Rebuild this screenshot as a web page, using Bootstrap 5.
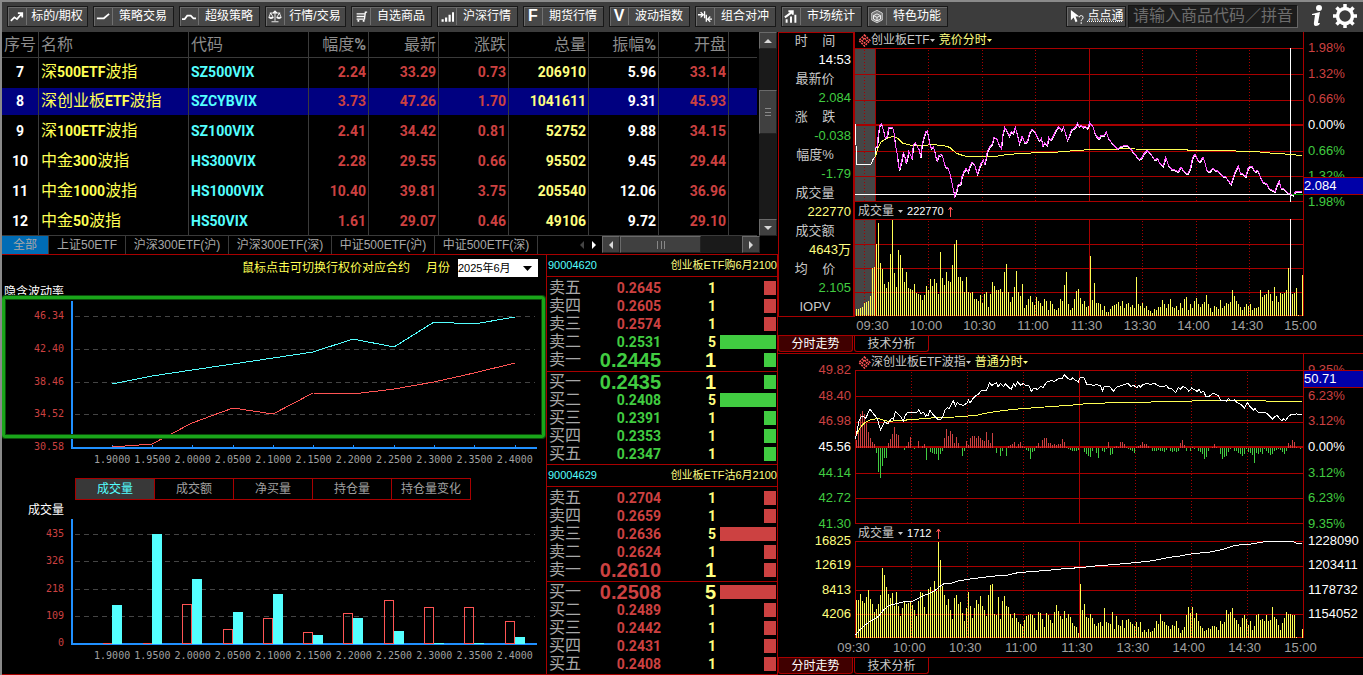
<!DOCTYPE html>
<html lang="zh-CN">
<head>
<meta charset="utf-8">
<meta name="viewport" content="width=device-width, initial-scale=1">
<title>期权行情</title>
<link href="https://cdn.jsdelivr.net/npm/bootstrap@5.3.0/dist/css/bootstrap.min.css" rel="stylesheet">
<style>
:root{--line:#a80000;--up:#cc4141;--down:#41cc41;--lemon:#ffff80;--aqua:#54ffff;--dim:#a0a0a0}
body{background:#000;color:#c8c8c8;font:12px/16px "Liberation Sans","Noto Sans CJK SC",sans-serif;border-left:2px solid #8a8a8a;min-height:100vh}
button,input,select{font-family:inherit}
svg{display:block}
.up{color:var(--up)!important}.down{color:var(--down)!important}.lemon{color:var(--lemon)!important}.aqua{color:var(--aqua)!important}
/* toolbar */
.topbar{height:32px;background:#3c3c3c;border-top:2px solid #8a8a8a;padding:0 5px 2px;gap:5px}
.tool{width:81px;height:21px;flex:none;border:1px solid #181818;background:#484848;box-shadow:inset 1px 1px #6a6a6a;color:#fff;font-size:12px;line-height:18px;padding:0}
.tool svg{width:19px;height:17px;padding:0 2px;border-right:1px solid #707070;flex:none}
.tool b{width:19px;font-size:16px;border-right:1px solid #707070;flex:none}
.tool span{flex:1}
.ask{width:60px;text-decoration:underline dotted}
.ask svg{border:0}
.search{width:170px;height:23px;margin-left:-3px;background:#1c1c1c;border:1px solid #141414;border-right-color:#666;border-bottom-color:#666;color:#fff;font-size:16px;padding:0 4px}
.search::placeholder{color:#6c6c6c}
.plain{background:none;border:0;padding:0}
/* layout */
.board{flex:776 1 0;min-width:0}
.quotes{flex:585 1 0;min-width:0}
/* quote list */
.list{width:100%;table-layout:fixed;border-collapse:separate;border-spacing:0;font:bold 14px/20px Roboto,"Noto Sans CJK SC",sans-serif}
.list th,.list td{height:30px;padding:0 2px;border-right:1px solid #3a3a3a;text-align:right;white-space:nowrap;overflow:hidden}
.list th{height:26px;border-bottom:1px solid #3a3a3a;color:#8c8c8c;font-weight:400;font-size:16px}
.list tbody tr:first-child td{height:28px}
.list tbody tr:last-child td{border-bottom:1px solid #3a3a3a}
.list th:last-child,.list td:last-child{border-right:0}
.list i{font-style:normal;font-weight:400;font-size:16px}
.list :is(th,td):is(:nth-child(2),:nth-child(3)){text-align:left}
.list td{color:var(--up)}
.list td:nth-child(1){color:#fff;text-align:center}
.list td:nth-child(2){color:#ffff54}
.list td:nth-child(3){color:var(--aqua)}
.list td:nth-child(7){color:var(--lemon)}
.list td:nth-child(8){color:#fff}
.list .picked td{background:#000080;box-shadow:inset 0 2px #000,inset 0 -1px #000}
.vbar{width:18px;flex:none;background:#1a1a1a;margin-left:2px;margin-right:1px}
.knob{background:#404040;border:1px solid #6a6a6a;border-right-color:#222;border-bottom-color:#222;color:#d8d8d8;padding:0;display:flex;align-items:center;justify-content:center}
.knob svg{width:8px;height:8px}
.vbar .knob{width:18px;height:17px}
.vbar .thumb{height:44px;margin-top:41px}
.hbar{width:158px;height:17px;background:#1a1a1a;margin-right:18px;flex:none}
.hbar .knob{width:18px}
.hbar .thumb{width:81px}
.packs{height:18px;background:#000}
.packs>button{background:#000;border:0;border-right:1px solid #3a3a3a;color:#a8a8a8;font-size:12px;line-height:16px;padding:0;width:103px;height:18px}
.packs>.on{background:#006cb5}
/* option charts */
.lower{border-top:1px solid var(--line);border-bottom:1px solid var(--line)}
.options{flex:544 1 0;min-width:0}
.pick{height:26px;font-size:12px;color:#ffff54;padding:0 8px}
.pick select{width:80px;height:18px;border:0;border-radius:0;color:#000;font-size:11px;padding:0;background:#fff;-webkit-appearance:none;appearance:none}
.pick .caret{right:6px;top:7px;pointer-events:none}
.curve{display:grid;grid-template-columns:64px 1fr;height:154px}
.curve.short{height:132px}
.curve svg{width:100%;height:100%}
.ticks,.strikes{font:10px/10px "DejaVu Sans Mono",monospace}
.ticks{color:var(--up);padding:7px 2px 0 0;line-height:16px;text-align:right}
.strikes{padding:0 11px 0 90px;color:var(--dim);height:10px}
.strikes span{flex:1 1 0;text-align:center}
.frame{left:0;right:1px;top:41px;height:142px;border:3px solid #1aa51a;border-radius:3px;box-shadow:0 0 0 1px #0b4d0b,inset 0 0 0 1px #0b4d0b;pointer-events:none}
.kinds{margin:13px 75px 0 73px;height:22px;border:1px solid var(--line)}
.kinds button{flex:1 1 0;background:#000;border:0;color:var(--dim);font-size:12px;line-height:18px;padding:0}
.kinds button+button{border-left:1px solid var(--line)}
.kinds .on{background:#383838;color:var(--aqua)}
.cap{color:#fff;font-size:12px;line-height:14px}
.iv{height:20px;padding:4px 0 0 2px}
.volcap{width:62px;padding:3px 0 2px;text-align:right}
/* order books */
.books{flex:230 1 0;border-left:1px solid var(--line);border-right:1px solid var(--line);min-width:0}
.code{height:22px;border-bottom:1px solid var(--line);font-size:11px;line-height:21px;padding-left:1px}
.ladder{width:100%;font:bold 14px/18px Roboto,"Noto Sans CJK SC",sans-serif;color:var(--up)}
.ladder th{width:34px;height:18px;padding:0 2px;font-weight:400;font-size:16px;color:#a8a8a8;white-space:nowrap}
.ladder td{height:18px;padding:0;text-align:right;width:78px}
.ladder td:nth-child(3){width:auto;color:var(--lemon)}
.ladder td:nth-child(4){width:61px;padding:0 1px 0 4px}
.ladder .best td{font:bold 20px/18px "Liberation Sans",sans-serif}
.ladder .depth{height:14px;margin-left:auto;background:currentColor}
.asks{border-bottom:1px solid var(--line);padding:2px 0}
.bids{border-bottom:1px solid var(--line);padding:1px 0}
.books>:last-child{border-bottom:0}
/* intraday panels */
.facts{width:77px;border:solid var(--line);border-width:1px 2px 1px 1px;margin:0;height:285px;font-size:13px;line-height:16px}
.facts dt,.facts dd{height:19px;margin:0;padding-right:2px}
.facts dt{font-weight:400;text-align:center;white-space:pre}
.facts dd{text-align:right}
.pane{display:grid;grid-template-columns:minmax(0,1fr) 60px;grid-template-rows:16px 154px 17px 97px 19px;font-size:13px}
.pane.wide{grid-template-columns:77px minmax(0,1fr) 60px;border-top:1px solid var(--line)}
.pane svg.plot{width:100%;height:100%;background:#000}
.plot path,.plot polyline,.curve path,.curve polyline{fill:none;stroke-width:1px;vector-effect:non-scaling-stroke;shape-rendering:crispEdges}
.grid{stroke:var(--line)}
.dots{stroke:var(--line);stroke-dasharray:1 2}
.plot .thick{stroke-width:2px}
.head{font-size:12px;line-height:16px;overflow:hidden;padding-left:3px;white-space:nowrap}
.head.vol{border-top:1px solid transparent}
.head small{font-size:11px;color:#fff}
.axisR{border-left:1px solid var(--line);padding-left:4px}
.behind{z-index:-1}
.scale{margin-top:-8px;height:170px;line-height:16px;white-space:nowrap}
.scale.low{height:89px}
.scaleL{padding-right:4px;text-align:right}
.now{left:0;right:0;height:16px;background:#0000a8;outline:1px solid var(--line);color:#fff;line-height:16px;font-size:13px}
.now.first{top:130px}
.now.second{top:1px}
.times{grid-column:1/-1;padding:0 46px 0 1px;color:var(--dim);line-height:20px}
.wide .times{padding-left:59px}
.times span{width:33px;text-align:center}
.views{height:18px;border-top:1px solid var(--line);background:#000}
.views button{width:75px;height:16px;border:1px solid var(--line);border-top:0;border-radius:0 0 3px 3px;background:#000;color:#c8c8c8;font-size:12px;line-height:14px;padding:0;margin-right:1px}
.views .on{background:#400000;color:#fff}
</style>
</head>
<body>
<nav class="topbar d-flex align-items-center" aria-label="工具栏">
  <button class="tool d-flex align-items-center"><svg viewBox="0 0 16 16" fill="none" stroke="#fff" stroke-width="2"><path d="M1 13l4-4 3 2 5-6M9 4h5v5"/></svg><span>标的/期权</span></button>
  <button class="tool d-flex align-items-center"><svg viewBox="0 0 16 16" fill="none" stroke="#fff" stroke-width="2"><path d="M1 10h8l6-5"/></svg><span>策略交易</span></button>
  <button class="tool d-flex align-items-center"><svg viewBox="0 0 16 16" fill="none" stroke="#fff" stroke-width="2"><path d="M0 11h3l3-4h4l3 3h3"/></svg><span>超级策略</span></button>
  <button class="tool d-flex align-items-center"><svg viewBox="0 0 16 16" fill="none" stroke="#fff"><path d="M8 2v11M4 14h8M2 4h12M3 4L1 9h5L3 4M13 4l-3 5h5z"/><path d="M6 4l2-2 2 2M1 9q2 2 5 0M10 9q3 2 5 0" stroke-width="1.5"/></svg><span>行情/交易</span></button>
  <button class="tool d-flex align-items-center"><svg viewBox="0 0 16 16" fill="none" stroke="#fff" stroke-width="1.5"><path d="M15 3h-2l-1 8H3M3 5h9M3 8h9"/><path d="M4 13h2M10 13h2" stroke-width="2"/></svg><span>自选商品</span></button>
  <button class="tool d-flex align-items-center"><svg viewBox="0 0 16 16" fill="none" stroke="#fff" stroke-width="2.500"><path d="M3 14v-3M7 14V9M11 14V6M15 14V3"/></svg><span>沪深行情</span></button>
  <button class="tool d-flex align-items-center"><b>F</b><span>期货行情</span></button>
  <button class="tool d-flex align-items-center"><b>V</b><span>波动指数</span></button>
  <button class="tool d-flex align-items-center"><svg viewBox="0 0 16 16" fill="none" stroke="#fff" stroke-width="1.500"><path d="M0 6h6M3 3l3 3-3 3M7.500 2v8M9.500 6v8M16 11h-5M14 8l-3 3 3 3"/></svg><span>组合对冲</span></button>
  <button class="tool d-flex align-items-center"><svg viewBox="0 0 16 16" fill="none" stroke="#fff" stroke-width="2.200"><path d="M3 15v-4M8 15V8M13 15V6M1 9l8-6M5 2h5v4"/></svg><span>市场统计</span></button>
  <button class="tool d-flex align-items-center"><svg viewBox="0 0 16 16" fill="#777" stroke="#ddd"><path d="M8 1l6 3v8l-6 3-6-3V4z"/><path d="M8 5l4 2v4l-4 2-4-2V7zM4 7l4 2 4-2M8 9v4" stroke="#fff"/></svg><span>特色功能</span></button>
  <button class="tool ask ms-auto d-flex align-items-center"><svg viewBox="0 0 16 16" fill="#fff"><path d="M2 1v11l3-3 2 5 2-1-2-5h4z"/><path d="M11 9q0-2 2-2t2 2-2 3v1M13 14v2" fill="none" stroke="#fff"/></svg><span>点点通</span></button>
  <input class="search" type="text" aria-label="搜索" placeholder="请输入商品代码／拼音.">
  <button class="plain ms-1" aria-label="信息"><svg width="20" height="24" viewBox="0 0 20 24" fill="#fff"><circle cx="12" cy="4" r="3"/><path d="M5 10l8-2-2 11 2 0-1 2q-6 3-5-3l1-7-3 0z"/></svg></button>
  <button class="plain" aria-label="设置"><svg width="26" height="26" viewBox="0 0 26 26" fill="none" stroke="#fff"><circle cx="13" cy="13" r="7.500" stroke-width="3.500"/><path d="M13 1v4M13 21v4M1 13h4M21 13h4M4.500 4.500l3 3M18.500 18.500l3 3M4.500 21.500l3-3M18.500 7.500l3-3" stroke-width="3.500"/></svg></button>
</nav>

<div class="d-flex">
<main class="board d-flex flex-column">
  <div class="d-flex">
    <div class="flex-grow-1 overflow-hidden">
    <table class="list">
      <colgroup><col width="37"><col width="150"><col width="120"><col width="60"><col width="70"><col width="70"><col width="80"><col width="70"><col width="70"><col width="29"></colgroup>
      <thead><tr><th>序号</th><th>名称</th><th>代码</th><th>幅度<b>%</b></th><th>最新</th><th>涨跌</th><th>总量</th><th>振幅<b>%</b></th><th>开盘</th><th></th></tr></thead>
      <tbody>
      <tr><td>7</td><td><i>深</i>500ETF<i>波指</i></td><td>SZ500VIX</td><td>2.24</td><td>33.29</td><td>0.73</td><td>206910</td><td>5.96</td><td>33.14</td><td></td></tr>
      <tr class="picked"><td>8</td><td><i>深创业板</i>ETF<i>波指</i></td><td>SZCYBVIX</td><td>3.73</td><td>47.26</td><td>1.70</td><td>1041611</td><td>9.31</td><td>45.93</td><td></td></tr>
      <tr><td>9</td><td><i>深</i>100ETF<i>波指</i></td><td>SZ100VIX</td><td>2.41</td><td>34.42</td><td>0.81</td><td>52752</td><td>9.88</td><td>34.15</td><td></td></tr>
      <tr><td>10</td><td><i>中金</i>300<i>波指</i></td><td>HS300VIX</td><td>2.28</td><td>29.55</td><td>0.66</td><td>95502</td><td>9.45</td><td>29.44</td><td></td></tr>
      <tr><td>11</td><td><i>中金</i>1000<i>波指</i></td><td>HS1000VIX</td><td>10.40</td><td>39.81</td><td>3.75</td><td>205540</td><td>12.06</td><td>36.96</td><td></td></tr>
      <tr><td>12</td><td><i>中金</i>50<i>波指</i></td><td>HS50VIX</td><td>1.61</td><td>29.07</td><td>0.46</td><td>49106</td><td>9.72</td><td>29.10</td><td></td></tr>
      </tbody>
    </table>
    </div>
    <div class="vbar d-flex flex-column">
      <button class="knob" aria-label="向上"><svg viewBox="0 0 8 8" fill="currentColor"><path d="M0 6l4-4 4 4z"/></svg></button>
      <button class="knob thumb" aria-label="滚动"><svg viewBox="0 0 8 8" stroke="#888"><path d="M1 .5h6M1 4.500h6M1 7.500h6"/></svg></button>
      <button class="knob mt-auto" aria-label="向下"><svg viewBox="0 0 8 8" fill="currentColor"><path d="M0 2l4 4 4-4z"/></svg></button>
    </div>
  </div>
  <div class="packs d-flex">
    <button class="on" style="width:47px">全部</button><button style="width:77px">上证50ETF</button><button>沪深300ETF(沪)</button><button>沪深300ETF(深)</button><button>中证500ETF(沪)</button><button>中证500ETF(深)</button>
    <div class="ms-auto d-flex align-items-center gap-1 pe-1"><svg width="8" height="8" fill="#444"><path d="M6 0L2 4l4 4z"/></svg><svg width="8" height="8" fill="#fff"><path d="M2 0l4 4-4 4z"/></svg></div>
    <div class="hbar d-flex">
      <button class="knob" aria-label="向左"><svg viewBox="0 0 8 8" fill="currentColor"><path d="M6 0L2 4l4 4z"/></svg></button>
      <button class="knob thumb" aria-label="滚动"><svg viewBox="0 0 8 8" stroke="#888"><path d="M.5 0v8M4.500 0v8M7.500 0v8"/></svg></button>
      <button class="knob ms-auto" aria-label="向右"><svg viewBox="0 0 8 8" fill="currentColor"><path d="M2 0l4 4-4 4z"/></svg></button>
    </div>
  </div>

  <div class="lower d-flex flex-grow-1">
    <section class="options position-relative">
      <div class="pick d-flex align-items-center justify-content-end"><span class="me-3">鼠标点击可切换行权价对应合约</span><label class="me-2" for="month">月份</label>
        <span class="position-relative"><select id="month"><option>2025年6月</option></select><svg class="caret position-absolute" width="9" height="5"><path d="M0 0h9L4.500 5z"/></svg></span></div>
      <div class="cap iv">隐含波动率</div>
      <div class="curve">
        <div class="ticks d-flex flex-column justify-content-between"><span>46.34</span><span>42.40</span><span>38.46</span><span>34.52</span><span>30.58</span></div>
        <svg viewBox="66 301 480 154" preserveAspectRatio="none">
          <path d="M75 316.500H535M75 349.500H535M75 382.500H535M75 414.500H535" stroke="#444" stroke-dasharray="5 4"/>
          <path d="M72 301V449M71 448H537" stroke="#2090ff" style="stroke-width:2px"/>
          <path id="ivticks" stroke="#2090ff"/>
          <polyline stroke="#54ffff" points="112,384 152,376 192,370 233,364 273,358 313,352 353,339 394,347 434,322 474,324 515,317"/>
          <polyline stroke="#ff5454" points="112,447 152,444 192,423 233,408 273,414 313,393 353,394 394,389 434,382 474,373 515,363"/>
        </svg>
      </div>
      <div class="strikes d-flex"><span>1.9000</span><span>1.9500</span><span>2.0000</span><span>2.0500</span><span>2.1000</span><span>2.1500</span><span>2.2000</span><span>2.2500</span><span>2.3000</span><span>2.3500</span><span>2.4000</span></div>
      <div class="kinds d-flex"><button class="on">成交量</button><button>成交额</button><button>净买量</button><button>持仓量</button><button>持仓量变化</button></div>
      <div class="cap volcap">成交量</div>
      <div class="curve short">
        <div class="ticks d-flex flex-column justify-content-between"><span>435</span><span>326</span><span>218</span><span>109</span><span>0</span></div>
        <svg viewBox="66 519 480 132" preserveAspectRatio="none">
          <path d="M75 534.500H535M75 561.500H535M75 589.500H535M75 616.500H535" stroke="#444" stroke-dasharray="5 4"/>
          <path d="M72 519V645M71 644H537" stroke="#2090ff" style="stroke-width:2px"/>
          <path id="puts" stroke="#ff5454"/>
          <path id="calls" style="fill:#54ffff"/>
        </svg>
      </div>
      <div class="strikes d-flex"><span>1.9000</span><span>1.9500</span><span>2.0000</span><span>2.0500</span><span>2.1000</span><span>2.1500</span><span>2.2000</span><span>2.2500</span><span>2.3000</span><span>2.3500</span><span>2.4000</span></div>
      <div class="frame position-absolute"></div>
    </section>

    <section class="books">
      <div class="code d-flex justify-content-between"><span class="aqua">90004620</span><span class="lemon">创业板ETF购6月2100</span></div>
      <div class="asks"><table class="ladder">
        <tr><th>卖五</th><td>0.2645</td><td>1</td><td><div class="depth" style="width:21%"></div></td></tr>
        <tr><th>卖四</th><td>0.2605</td><td>1</td><td><div class="depth" style="width:21%"></div></td></tr>
        <tr><th>卖三</th><td>0.2574</td><td>1</td><td><div class="depth" style="width:21%"></div></td></tr>
        <tr class="down"><th>卖二</th><td>0.2531</td><td>5</td><td><div class="depth" style="width:100%"></div></td></tr>
        <tr class="down best"><th>卖一</th><td>0.2445</td><td>1</td><td><div class="depth" style="width:21%"></div></td></tr>
      </table></div>
      <div class="bids"><table class="ladder down">
        <tr class="best"><th>买一</th><td>0.2435</td><td>1</td><td><div class="depth" style="width:21%"></div></td></tr>
        <tr><th>买二</th><td>0.2408</td><td>5</td><td><div class="depth" style="width:100%"></div></td></tr>
        <tr><th>买三</th><td>0.2391</td><td>1</td><td><div class="depth" style="width:21%"></div></td></tr>
        <tr><th>买四</th><td>0.2353</td><td>1</td><td><div class="depth" style="width:21%"></div></td></tr>
        <tr><th>买五</th><td>0.2347</td><td>1</td><td><div class="depth" style="width:21%"></div></td></tr>
      </table></div>
      <div class="code d-flex justify-content-between"><span class="aqua">90004629</span><span class="lemon">创业板ETF沽6月2100</span></div>
      <div class="asks"><table class="ladder">
        <tr><th>卖五</th><td>0.2704</td><td>1</td><td><div class="depth" style="width:21%"></div></td></tr>
        <tr><th>卖四</th><td>0.2659</td><td>1</td><td><div class="depth" style="width:21%"></div></td></tr>
        <tr><th>卖三</th><td>0.2636</td><td>5</td><td><div class="depth" style="width:100%"></div></td></tr>
        <tr><th>卖二</th><td>0.2624</td><td>1</td><td><div class="depth" style="width:21%"></div></td></tr>
        <tr class="best"><th>卖一</th><td>0.2610</td><td>1</td><td><div class="depth" style="width:21%"></div></td></tr>
      </table></div>
      <div class="bids"><table class="ladder">
        <tr class="best"><th>买一</th><td>0.2508</td><td>5</td><td><div class="depth" style="width:100%"></div></td></tr>
        <tr><th>买二</th><td>0.2489</td><td>1</td><td><div class="depth" style="width:21%"></div></td></tr>
        <tr><th>买三</th><td>0.2442</td><td>1</td><td><div class="depth" style="width:21%"></div></td></tr>
        <tr><th>买四</th><td>0.2431</td><td>1</td><td><div class="depth" style="width:21%"></div></td></tr>
        <tr><th>买五</th><td>0.2408</td><td>1</td><td><div class="depth" style="width:21%"></div></td></tr>
      </table></div>
    </section>
  </div>
</main>

<aside class="quotes">
  <div class="d-flex">
    <dl class="facts flex-shrink-0"><dt>时    间</dt><dd class="text-white">14:53</dd><dt>最新价</dt><dd class="down">2.084</dd><dt>涨    跌</dt><dd class="down">-0.038</dd><dt>幅度%</dt><dd class="down">-1.79</dd><dt>成交量</dt><dd class="lemon">222770</dd><dt>成交额</dt><dd class="lemon">4643万</dd><dt>均    价</dt><dd class="down">2.105</dd><dt>IOPV</dt></dl>
    <div class="pane flex-grow-1">
      <div class="head d-flex align-items-center"><svg width="13" height="13" viewBox="0 0 13 13" fill="none" stroke="#ff5454" stroke-width="1.500" stroke-dasharray="2 1"><path d="M6.500 1L12 6.500 6.500 12 1 6.500zM6.500 4L9 6.500 6.500 9 4 6.500z"/></svg><span>创业板ETF</span><svg width="5" height="3" fill="#c8c8c8"><path d="M0 0h5L2.500 3z"/></svg><span class="lemon ms-1">竞价分时</span><svg width="5" height="3" fill="#ffff80"><path d="M0 0h5L2.500 3z"/></svg></div>
      <div class="axisR"></div>
      <svg class="plot" viewBox="231 54 1344 462" preserveAspectRatio="none">
        <path d="M231 54H292V516H231z" style="fill:#464646"/>
        <path class="grid" d="M231 55.500H1575M231 133.500H1575M231 211.500H1575M231 364.500H1575M231 439.500H1575M231 514.500H1575M292.500 54V516M934.500 54V516"/>
        <path class="grid thick" d="M231 285H1575"/>
        <path class="dots" d="M259.500 60V516M451.500 60V516M613.500 60V516M772.500 60V516M1093.500 60V516M1255.500 60V516M1414.500 60V516"/>
        <path stroke="#fff" d="M231 493.500H1575M1537.500 54V516"/>
        <polyline stroke="#fff" points="232,283 234,345 235,403 279,403 285,388 292,380 292,350"/>
        <polyline stroke="#ffff54" points="292,380 300,355 310,335 322,328 345,318 360,326 375,340 395,345 430,346 470,344 500,348 515,352 535,370 560,378 600,380 655,379 690,373 760,369 840,366 900,361 935,359 1015,358 1035,355 1070,357 1225,359 1235,362 1350,362 1445,366 1475,369 1535,373 1571,377"/>
        <g id="price1"><polyline points="290,352 298,350 300,320 305,288 311,282 316,300 322,325 328,318 332,292 344,294 348,310 352,345 358,375 360,395 364,420 368,405 372,388 376,368 380,378 384,398 388,385 392,365 398,375 402,386 406,345 412,338 418,350 424,360 428,382 432,345 438,320 444,304 448,302 452,325 456,345 460,355 466,350 470,362 474,385 478,392 482,376 492,374 496,388 502,410 510,415 516,432 520,450 526,480 530,498 536,482 540,465 548,462 552,440 556,428 564,415 570,425 576,408 582,396 590,405 598,432 604,415 610,398 616,390 620,402 624,388 628,365 634,352 642,342 648,322 656,326 664,345 670,355 674,315 680,292 688,305 694,318 700,305 706,310 712,292 718,315 724,340 732,318 740,338 748,335 754,310 762,298 770,304 776,318 784,332 790,325 794,348 800,338 808,346 812,322 818,330 826,318 834,300 842,290 850,300 856,292 862,310 868,330 874,318 880,300 888,295 894,290 899,278 903,290 909,286 915,292 921,288 927,295 931,290 935,277 939,283 945,290 949,305 955,318 963,326 969,315 977,318 985,305 991,325 999,335 1007,345 1019,357 1027,350 1039,347 1051,348 1059,358 1067,368 1075,378 1083,388 1091,385 1097,372 1107,362 1117,370 1125,382 1131,390 1139,385 1145,400 1155,408 1163,382 1171,405 1181,418 1191,420 1201,425 1209,410 1217,424 1229,432 1237,415 1243,385 1251,372 1259,390 1265,395 1275,382 1281,400 1287,422 1295,425 1303,415 1311,420 1317,422 1327,430 1335,440 1343,440 1351,452 1359,463 1365,445 1371,425 1381,408 1387,430 1395,432 1403,440 1411,412 1421,408 1431,425 1439,420 1447,440 1455,458 1465,460 1473,475 1481,480 1491,485 1497,465 1503,452 1509,475 1517,475 1525,485 1535,492 1545,495 1553,485 1571,486"/></g>
        <path stroke="#00a000" d="M1543 493.500H1575"/>
      </svg>
      <div class="axisR position-relative"><div class="scale d-flex flex-column justify-content-between"><span class="up">1.98%</span><span class="up">1.32%</span><span class="up">0.66%</span><span class="text-white">0.00%</span><span class="down">0.66%</span><span class="down">1.32%</span><span class="down">1.98%</span></div><div class="now first position-absolute">2.084</div></div>
      <div class="head vol d-flex align-items-center"><span>成交量</span><svg class="ms-1 me-1" width="5" height="3" fill="#c8c8c8"><path d="M0 0h5L2.500 3z"/></svg><small>222770</small><svg class="ms-1" width="5" height="11" stroke="#ff5454" fill="none"><path d="M2.500 11V1M.5 4l2-3 2 3"/></svg></div>
      <div class="axisR behind"></div>
      <svg class="plot" viewBox="231 567 1344 291" preserveAspectRatio="none">
        <path d="M231 567H292V858H231z" style="fill:#464646"/>
        <path class="grid" d="M231 568.500H1575M231 643.500H1575M231 715.500H1575M231 787.500H1575M231 856.500H1575M292.500 567V858M934.500 567V858"/>
        <path class="dots" d="M259.500 573V858M451.500 573V858M613.500 573V858M772.500 573V858M1093.500 573V858M1255.500 573V858M1414.500 573V858"/>
        <path id="vol1" stroke="#ffff54"/>
        <path stroke="#fff" d="M1537.500 567V858"/>
      </svg>
      <div class="axisR"></div>
      <div class="times d-flex justify-content-between"><span>09:30</span><span>10:00</span><span>10:30</span><span>11:00</span><span>11:30</span><span>13:30</span><span>14:00</span><span>14:30</span><span>15:00</span></div>
    </div>
  </div>
  <div class="views d-flex"><button class="on">分时走势</button><button>技术分析</button></div>

  <div class="pane wide">
    <div></div>
    <div class="head d-flex align-items-center"><svg width="13" height="13" viewBox="0 0 13 13" fill="none" stroke="#ff5454" stroke-width="1.500" stroke-dasharray="2 1"><path d="M6.500 1L12 6.500 6.500 12 1 6.500zM6.500 4L9 6.500 6.500 9 4 6.500z"/></svg><span>深创业板ETF波指</span><svg width="5" height="3" fill="#c8c8c8"><path d="M0 0h5L2.500 3z"/></svg><span class="lemon ms-1">普通分时</span><svg width="5" height="3" fill="#ffff80"><path d="M0 0h5L2.500 3z"/></svg></div>
    <div class="axisR"></div>
    <div class="scaleL"><div class="scale d-flex flex-column justify-content-between"><span class="up">49.82</span><span class="up">48.40</span><span class="up">46.98</span><span class="text-white">45.56</span><span class="down">44.14</span><span class="down">42.72</span><span class="down">41.30</span></div></div>
    <svg class="plot" viewBox="231 60 1344 462" preserveAspectRatio="none">
      <path class="grid" d="M232.500 60V522M231 61.500H1575M231 139.500H1575M231 217.500H1575M231 370.500H1575M231 445.500H1575M231 520.500H1575M904.500 60V522"/>
      <path class="grid thick" d="M231 291H1575"/>
      <path class="dots" d="M400.500 66V522M568.500 66V522M736.500 66V522M1072.500 66V522M1240.500 66V522M1408.500 66V522"/>
      <path id="gain" stroke="#cc4141"/><path id="loss" stroke="#41cc41"/>
      <polyline stroke="#ffff54" points="232,262 245,235 260,218 275,210 300,205 315,210 330,214 400,209 460,204 530,201 595,196 620,190 680,181 730,176 800,171 900,164 915,162 1005,158 1120,156 1125,154 1240,154 1250,151 1455,151 1467,154 1571,155"/>
      <polyline stroke="#fff" points="232,268 238,240 243,212 250,198 256,200 264,205 270,188 276,178 284,188 292,198 298,205 302,222 308,240 313,230 320,215 330,222 340,205 346,208 352,184 360,192 368,200 376,214 382,196 388,188 398,186 408,188 418,186 422,178 428,190 438,188 442,198 446,194 450,198 456,180 462,190 468,196 474,202 480,208 488,208 494,200 500,182 508,172 514,176 520,162 526,152 532,168 538,158 546,164 556,166 566,160 572,150 576,160 584,146 592,138 600,134 608,124 616,120 624,122 630,112 634,98 642,106 650,100 656,98 660,110 668,100 676,110 682,102 692,112 700,118 706,102 712,108 718,96 728,106 736,100 744,108 752,106 760,124 768,114 778,118 788,110 796,112 804,98 812,94 820,92 830,94 838,88 846,84 852,86 858,74 868,84 878,90 884,84 892,90 901,96 905,84 917,82 927,104 935,102 945,106 955,104 967,106 973,124 979,108 989,108 997,112 1007,124 1015,112 1027,108 1039,104 1049,100 1059,110 1067,106 1077,114 1083,104 1087,112 1095,104 1107,100 1117,104 1129,100 1139,106 1147,110 1159,110 1165,106 1173,116 1181,116 1193,128 1201,112 1207,118 1215,110 1225,114 1233,124 1241,114 1251,120 1257,124 1263,118 1269,128 1277,124 1283,138 1295,138 1305,130 1315,134 1321,136 1327,150 1335,152 1341,150 1345,154 1351,146 1359,152 1369,150 1377,158 1387,162 1399,174 1409,157 1415,168 1427,180 1431,176 1439,186 1447,188 1457,186 1467,190 1475,198 1483,208 1491,200 1497,196 1505,206 1511,212 1517,206 1523,212 1531,200 1539,194 1555,192 1571,193"/>
    </svg>
    <div class="axisR position-relative"><div class="scale d-flex flex-column justify-content-between"><span class="up">9.35%</span><span class="up">6.23%</span><span class="up">3.12%</span><span class="text-white">0.00%</span><span class="down">3.12%</span><span class="down">6.23%</span><span class="down">9.35%</span></div><div class="now second position-absolute">50.71</div></div>
    <div></div>
    <div class="head vol d-flex align-items-center"><span>成交量</span><svg class="ms-1 me-1" width="5" height="3" fill="#c8c8c8"><path d="M0 0h5L2.500 3z"/></svg><small>1712</small><svg class="ms-1" width="5" height="11" stroke="#ff5454" fill="none"><path d="M2.500 11V1M.5 4l2-3 2 3"/></svg></div>
    <div class="axisR behind"></div>
    <div class="scaleL"><div class="scale low lemon d-flex flex-column justify-content-between"><span>16825</span><span>12619</span><span>8413</span><span>4206</span></div></div>
    <svg class="plot" viewBox="231 573 1344 291" preserveAspectRatio="none">
      <path class="grid" d="M232.500 573V864M231 574.500H1575M231 649.500H1575M231 721.500H1575M231 793.500H1575M231 862.500H1575M904.500 573V864"/>
      <path class="dots" d="M400.500 579V864M568.500 579V864M736.500 579V864M1072.500 579V864M1240.500 579V864M1408.500 579V864"/>
      <path id="vol2" stroke="#ffff54"/>
      <polyline stroke="#fff" points="232,856 245,840 260,826 275,815 290,806 303,798 315,782 330,768 345,763 360,760 378,755 400,756 420,745 440,735 455,730 470,722 480,714 490,706 500,700 520,700 540,693 570,688 600,684 640,679 690,675 720,668 770,664 820,660 860,656 905,653 950,648 1005,644 1070,638 1125,632 1175,622 1205,618 1240,612 1295,606 1335,598 1370,586 1420,582 1460,575 1545,574.500 1555,579 1571,580"/>
    </svg>
    <div class="axisR"><div class="scale low text-white d-flex flex-column justify-content-between"><span>1228090</span><span>1203411</span><span>1178732</span><span>1154052</span></div></div>
    <div class="times d-flex justify-content-between"><span>09:30</span><span>10:00</span><span>10:30</span><span>11:00</span><span>11:30</span><span>13:30</span><span>14:00</span><span>14:30</span><span>15:00</span></div>
  </div>
  <div class="views d-flex"><button class="on">分时走势</button><button>技术分析</button></div>
</aside>
</div>

<script src="https://cdn.jsdelivr.net/npm/bootstrap@5.3.0/dist/js/bootstrap.bundle.min.js"></script>
<script>
// Volume and momentum bars, evenly spaced over the session
const vol1=[7,7,8,9,13,14,15,20,48,49,72,93,53,47,32,28,34,62,96,43,29,66,61,48,34,44,28,27,26,32,23,22,21,16,21,30,26,37,30,37,33,22,64,38,31,44,35,34,51,72,76,39,39,35,24,39,24,23,24,17,17,15,21,13,22,24,9,22,34,30,26,26,27,24,44,52,24,14,19,29,45,24,20,32,8,11,17,20,14,11,19,15,13,10,17,15,6,15,12,7,6,8,17,15,31,44,12,6,8,17,25,27,18,12,15,9,10,60,16,33,13,13,12,6,10,4,4,7,10,11,12,14,10,15,8,12,13,9,11,8,39,12,10,13,8,10,6,5,3,7,6,9,9,16,12,8,12,17,9,8,10,6,13,8,17,19,6,12,8,15,18,12,9,12,14,21,12,8,4,10,9,7,16,8,10,13,12,14,26,20,15,12,9,6,9,12,10,12,6,8,8,9,26,19,21,22,26,22,15,29,20,14,23,22,23,26,48,27,22,23,28,1,0,41];
const vol2=[38,38,44,37,35,41,48,39,34,26,29,34,43,70,63,51,44,40,45,32,46,32,22,30,37,34,35,37,33,28,22,37,46,45,31,24,49,51,47,57,47,96,78,52,43,33,39,28,19,40,43,34,36,25,17,30,46,32,20,30,38,34,42,32,28,22,43,53,54,24,23,41,19,37,42,32,31,24,20,25,20,16,14,12,18,22,23,24,23,20,8,26,25,19,11,25,23,18,15,26,33,27,22,19,27,20,24,21,15,12,11,5,54,28,34,21,20,24,20,14,12,15,16,12,30,16,15,14,26,9,22,13,12,18,10,18,19,16,14,12,16,11,16,6,8,6,9,6,7,10,17,14,24,17,16,13,12,9,13,12,17,10,5,8,11,23,31,25,31,20,25,17,12,10,7,8,10,9,12,12,11,8,17,14,16,28,24,26,30,20,18,14,11,20,23,19,13,17,8,12,23,24,18,19,17,23,17,18,31,21,19,13,8,15,20,26,24,24,23,23,1,0,0,9];
const diff=[8,18,34,37,34,25,16,10,6,4,-5,-24,-30,-18,-10,-10,5,9,14,21,14,13,0,0,-2,2,6,11,0,-1,0,7,0,2,4,-12,0,-4,-5,-6,-6,-12,-6,-3,10,19,12,17,14,5,11,5,0,-8,-3,7,3,10,12,12,10,12,10,8,7,16,8,5,15,0,-5,0,-8,-3,0,-8,2,3,4,6,1,4,6,2,1,-2,-3,-11,-4,-3,2,5,1,8,10,10,5,5,3,4,3,4,4,9,6,1,-1,-2,-3,-3,-3,-2,0,0,-4,-6,-8,-9,-3,0,-5,-10,0,-3,-4,-1,6,-7,-6,1,2,1,6,6,4,1,-1,-2,-3,-5,1,2,3,6,4,4,2,0,-3,-3,-3,-2,-3,-3,-4,-2,0,-3,-4,-3,-4,-3,5,8,3,-3,0,-3,1,-1,0,-3,-4,-6,-11,-9,-3,0,1,4,1,0,-6,-11,-9,-8,-4,-1,0,-3,-3,-5,-6,-8,-6,-1,-4,-5,-7,-15,-5,-6,-4,-6,-1,-3,-5,-7,-6,-3,-2,-1,-2,-4,-6,-3,5,3,8,6,1,0,-1,0];
const set=(id,d)=>document.getElementById(id).setAttribute('d',d);
const bars=(a,base)=>a.map((v,i)=>v?`M${235.5+6*i} ${base}v${-3*v}`:'').join('');
set('vol1',bars(vol1,858));
set('vol2',bars(vol2,864));
set('gain',bars(diff.map(v=>Math.max(v,0)),294));
set('loss',bars(diff.map(v=>Math.min(v,0)),294));
// A white companion line runs just behind the magenta price line
const price=document.querySelector('#price1 polyline'),shade=price.cloneNode();
shade.setAttribute('stroke','#fff');shade.setAttribute('transform','translate(1 3)');
price.setAttribute('stroke','#ff54ff');price.before(shade);
// Option volumes by strike
const xs=[112,152,192,233,273,313,353,394,434,474,515];
const calls=[605,534,579,612,594,635,618,631,643,643,637],puts=[643,643,604,629,618,632,613,600,607,607,621];
set('ivticks',xs.map(x=>`M${x+.5} 448v-3`).join(''));
set('calls',xs.map((x,i)=>`M${x} ${calls[i]}h10V644h-10z`).join(''));
set('puts',xs.map((x,i)=>`M${x-9.5} 643.5V${puts[i]+.5}h9V643.5z`).join(''));
</script>
</body>
</html>
